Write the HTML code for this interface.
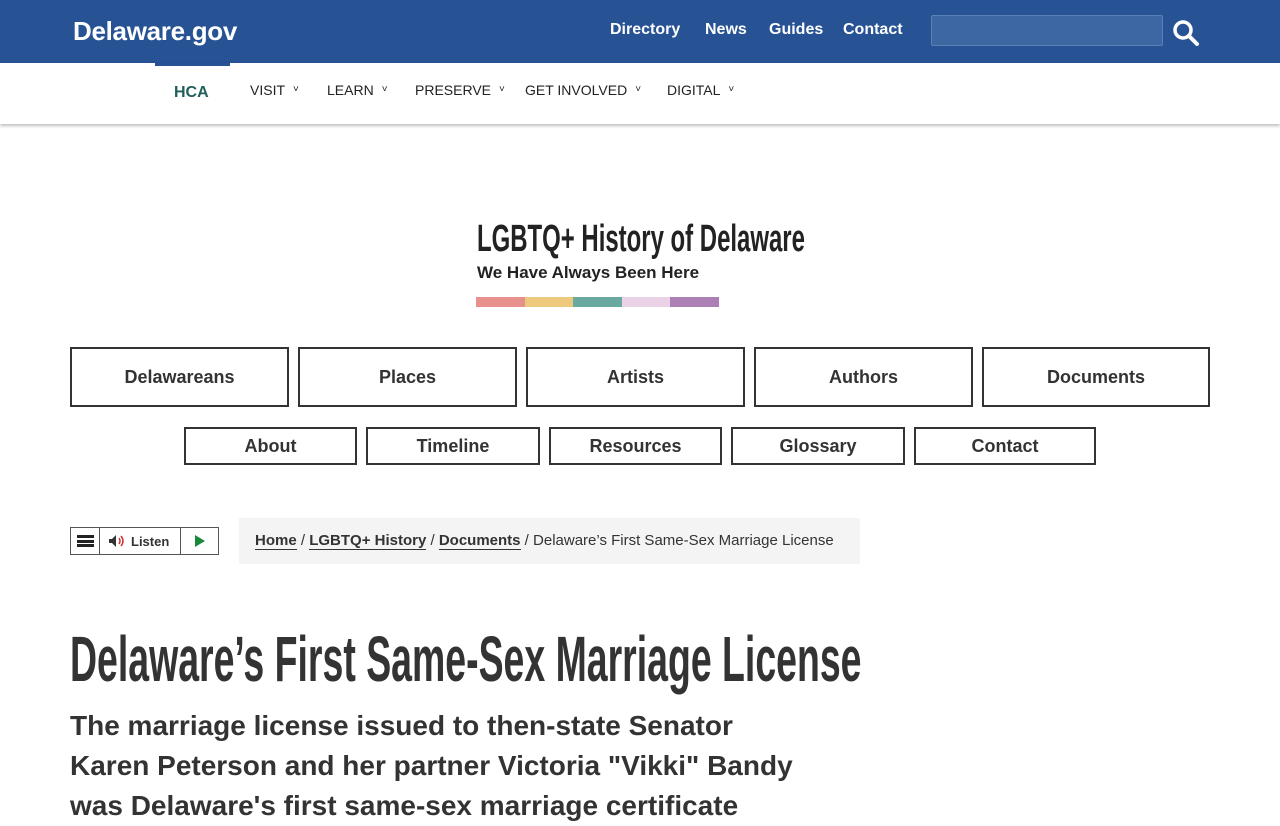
<!DOCTYPE html>
<html><head><meta charset="utf-8"><style>
*{box-sizing:border-box;margin:0;padding:0}
body{width:1280px;height:800px;overflow:hidden;background:#fff;font-family:"Liberation Sans",sans-serif;color:#333;position:relative}
.top{position:absolute;left:0;top:0;width:1280px;height:63px;background:#275294}
.top .logo{position:absolute;left:73px;top:16px;color:#fff;font-weight:bold;font-size:26px;letter-spacing:-0.3px}
.top a{position:absolute;top:21px;color:#fff;font-weight:bold;font-size:16px}
.search{position:absolute;left:931px;top:15px;width:232px;height:31px;background:#3d67a3;border:1px solid #5a7fb5;border-radius:2px}
.nav{position:absolute;left:0;top:63px;width:1280px;height:61px;background:#fff;box-shadow:0 2px 3px rgba(0,0,0,.25)}
.nav .bar{position:absolute;left:155px;top:0;width:75px;height:3px;background:#275294}
.nav .hca{position:absolute;left:174px;top:21px;font-weight:bold;font-size:16px;color:#1f5f5b}
.nav span.i{position:absolute;top:19px;font-size:14px;color:#222}
.nav span.i small{font-size:10px;margin-left:8px;vertical-align:3px}
.brand{position:absolute;left:477px;top:218px}
.brand .t{display:inline-block;font-size:38px;color:#222;transform:scaleX(.63);transform-origin:left;white-space:nowrap;font-weight:bold}
.brand .s{position:absolute;left:0;top:45px;font-weight:bold;font-size:17px;color:#222;white-space:nowrap}
.stripe{position:absolute;top:297px;height:10px}
.b{position:absolute;border:2px solid #333;display:flex;align-items:center;justify-content:center;font-weight:bold;font-size:18px;color:#333}
.listen{position:absolute;left:70px;top:527px;width:149px;height:28px;border:1px solid #555;font-size:13px;font-weight:bold}
.crumb{position:absolute;left:239px;top:518px;width:621px;height:46px;background:#f4f4f4;font-size:15px;padding:14px 0 0 16px;white-space:nowrap;color:#333}
.crumb u{font-weight:bold;text-decoration:none;border-bottom:1px solid #333}
h1{position:absolute;left:70px;top:622px;font-size:64px;font-weight:bold;color:#333;white-space:nowrap;transform:scaleX(.585);transform-origin:left}
.sub{position:absolute;left:70px;top:706px;width:900px;font-size:28px;font-weight:bold;line-height:40px;color:#333;white-space:nowrap}
</style></head><body>
<div class="top">
<div class="logo">Delaware.gov</div>
<a style="left:610px">Directory</a><a style="left:705px">News</a><a style="left:769px">Guides</a><a style="left:843px">Contact</a>
<div class="search"></div>
<svg style="position:absolute;left:1172px;top:19px" width="28" height="28" viewBox="0 0 28 28"><circle cx="11" cy="11" r="8" fill="none" stroke="#fff" stroke-width="3.5"/><line x1="17" y1="17" x2="25" y2="25" stroke="#fff" stroke-width="4" stroke-linecap="round"/></svg>
</div>
<div class="nav"><div class="bar"></div><div class="hca">HCA</div>
<span class="i" style="left:250px">VISIT<small>˅</small></span>
<span class="i" style="left:327px">LEARN<small>˅</small></span>
<span class="i" style="left:415px">PRESERVE<small>˅</small></span>
<span class="i" style="left:525px">GET INVOLVED<small>˅</small></span>
<span class="i" style="left:667px">DIGITAL<small>˅</small></span>
</div>
<div class="brand"><div class="t">LGBTQ+ History of Delaware</div><div class="s">We Have Always Been Here</div></div>
<div class="stripe" style="left:476px;width:49px;background:#e8908b"></div>
<div class="stripe" style="left:525px;width:48px;background:#ecc97c"></div>
<div class="stripe" style="left:573px;width:49px;background:#6aa9a0"></div>
<div class="stripe" style="left:622px;width:48px;background:#ead3e6"></div>
<div class="stripe" style="left:670px;width:49px;background:#ad80b5"></div>
<div class="b" style="left:70px;top:347px;width:219px;height:60px">Delawareans</div>
<div class="b" style="left:298px;top:347px;width:219px;height:60px">Places</div>
<div class="b" style="left:526px;top:347px;width:219px;height:60px">Artists</div>
<div class="b" style="left:754px;top:347px;width:219px;height:60px">Authors</div>
<div class="b" style="left:982px;top:347px;width:228px;height:60px">Documents</div>
<div class="b" style="left:184px;top:427px;width:173px;height:38px">About</div>
<div class="b" style="left:366px;top:427px;width:174px;height:38px">Timeline</div>
<div class="b" style="left:549px;top:427px;width:173px;height:38px">Resources</div>
<div class="b" style="left:731px;top:427px;width:174px;height:38px">Glossary</div>
<div class="b" style="left:914px;top:427px;width:182px;height:38px">Contact</div>
<div class="listen">
<div style="position:absolute;left:0;top:0;width:29px;height:26px;border-right:1px solid #555"><div style="position:absolute;left:6px;top:7px;width:17px;height:12px;border-top:3px solid #222;border-bottom:3px solid #222"></div><div style="position:absolute;left:6px;top:11.5px;width:17px;height:3px;background:#222"></div></div>
<svg style="position:absolute;left:37px;top:6px" width="20" height="14" viewBox="0 0 20 14"><path d="M1 5h3l4-4v12l-4-4H1z" fill="#333"/><path d="M11 4q2 3 0 6M13 2q4 5 0 10" stroke="#c33" stroke-width="1.5" fill="none"/></svg>
<div style="position:absolute;left:60px;top:6px;color:#333">Listen</div>
<div style="position:absolute;left:109px;top:0;width:1px;height:26px;background:#555"></div>
<div style="position:absolute;left:124px;top:7px;width:0;height:0;border-left:10px solid #1a8a3a;border-top:6px solid transparent;border-bottom:6px solid transparent"></div>
</div>
<div class="crumb"><u>Home</u> / <u>LGBTQ+ History</u> / <u>Documents</u> / Delaware’s First Same-Sex Marriage License</div>
<h1>Delaware’s First Same-Sex Marriage License</h1>
<div class="sub">The marriage license issued to then-state Senator<br>Karen Peterson and her partner Victoria "Vikki" Bandy<br>was Delaware's first same-sex marriage certificate</div>
</body></html>
